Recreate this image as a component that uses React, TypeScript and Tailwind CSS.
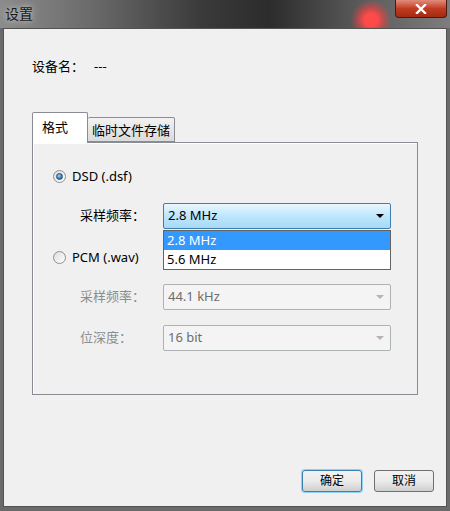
import React from "react";

const font = { fontFamily: '"Noto Sans", "Noto Sans CJK SC", sans-serif' };

function Radio({ checked }: { checked: boolean }) {
  return (
    <span className="flex h-[13px] w-[13px] items-center justify-center rounded-full border border-[#8e8f8f] bg-gradient-to-br from-[#dcdcdc] to-[#ffffff]">
      {checked && (
        <span className="h-[7px] w-[7px] rounded-full border border-[#1b4f7a] bg-[radial-gradient(circle_at_40%_35%,#9fd4f7,#2a6ea8_70%)]" />
      )}
    </span>
  );
}

function Arrow({ color }: { color: string }) {
  return (
    <svg width="8" height="4" viewBox="0 0 8 4">
      <path d="M0 0 L8 0 L4 4 Z" fill={color} />
    </svg>
  );
}

function Combo({ value, active }: { value: string; active?: boolean }) {
  if (active) {
    return (
      <div className="flex h-[26px] w-[228px] items-center justify-between rounded-[2px] border border-[#3c7fb1] bg-gradient-to-b from-[#eaf6fd] via-[#bee6fd] to-[#a7d9f5] pl-[4px] pr-[6px] text-[13px] text-black">
        <span>{value}</span>
        <Arrow color="#000" />
      </div>
    );
  }
  return (
    <div className="flex h-[26px] w-[228px] items-center justify-between rounded-[2px] border border-[#adb2b5] bg-[#f4f4f4] pl-[4px] pr-[6px] text-[13px] text-[#6d6d6d]">
      <span>{value}</span>
      <Arrow color="#b4b4b4" />
    </div>
  );
}

export default function App() {
  return (
    <div className="relative h-[511px] w-[450px] overflow-hidden bg-[#6a6a6a]" style={font}>
      {/* title bar */}
      <div className="relative h-[28px] bg-[linear-gradient(90deg,#8c8c8c_0%,#6b6b6b_20%,#3a3a3a_45%,#2c2c2c_60%,#5a5a5a_80%,#7d7d7d_100%)]">
        <span className="absolute left-[5px] top-[3px] text-[14px] text-[#1a1a1a] [text-shadow:0_0_6px_rgba(255,255,255,0.8)]">
          设置
        </span>
        <div className="absolute left-[350px] top-[0px] h-[40px] w-[42px] rounded-full bg-[radial-gradient(circle,#ff4a4a_22%,rgba(255,60,60,0.5)_45%,rgba(255,60,60,0)_70%)]" />
        <div className="absolute right-[3px] top-0 flex h-[18px] w-[52px] items-center justify-center rounded-b-[4px] border border-t-0 border-[#4a1a12] bg-gradient-to-b from-[#e08c7c] via-[#c23b21] to-[#a42a12]">
          <svg width="12" height="10" viewBox="0 0 12 10">
            <path d="M2 1 L10 9 M10 1 L2 9" stroke="#fff" strokeWidth="2.4" strokeLinecap="square" />
          </svg>
        </div>
      </div>

      {/* client area */}
      <div className="relative mx-[3px] h-[479px] border border-[#525252] bg-[#f0f0f0] text-[12px] text-black">
        <div className="flex gap-[10px] pl-[28px] pt-[28px] text-[13px]">
          <span>设备名：</span>
          <span>---</span>
        </div>

        {/* tabs */}
        <div className="ml-[28px] mt-[35px] w-[386px]">
          <div className="flex items-end">
            <div className="relative z-10 -mb-px h-[31px] w-[56px] rounded-t-[2px] border border-b-0 border-[#898c95] bg-white pl-[9px] pt-[5px] text-[13px]">
              格式
            </div>
            <div className="h-[25px] rounded-t-[2px] border border-l-0 border-[#898c95] bg-gradient-to-b from-[#f2f2f2] to-[#dbdbdb] px-[4px] pt-[3px] text-[13px]">
              临时文件存储
            </div>
          </div>
          <div className="relative h-[253px] border border-[#898c95] bg-[#f0f0f0] shadow-[inset_1px_1px_0_#fff]">
            <div className="flex items-center gap-[6px] pl-[20px] pt-[24px] text-[13px]">
              <Radio checked />
              <span>DSD (.dsf)</span>
            </div>
            <div className="mt-[17px] flex items-center pl-[47px]">
              <span className="w-[83px] text-[13px]">采样频率：</span>
              <Combo value="2.8 MHz" active />
            </div>
            <div className="mt-[19px] flex items-center gap-[6px] pl-[20px] text-[13px]">
              <Radio checked={false} />
              <span>PCM (.wav)</span>
            </div>
            <div className="mt-[16px] flex items-center pl-[47px]">
              <span className="w-[83px] text-[13px] text-[#8d8d8d]">采样频率：</span>
              <Combo value="44.1 kHz" />
            </div>
            <div className="mt-[15px] flex items-center pl-[47px]">
              <span className="w-[83px] text-[13px] text-[#8d8d8d]">位深度：</span>
              <Combo value="16 bit" />
            </div>

            {/* open dropdown list */}
            <div className="absolute left-[130px] top-[87px] w-[228px] border border-[#646464] bg-white text-[13px]">
              <div className="h-[19px] bg-[#3399ff] pl-[3px] leading-[19px] text-white">2.8 MHz</div>
              <div className="h-[19px] pl-[3px] leading-[19px]">5.6 MHz</div>
            </div>
          </div>
        </div>

        {/* buttons */}
        <div className="mt-[75px] flex justify-end gap-[12px] pr-[12px]">
          <button className="h-[22px] w-[60px] rounded-[3px] border border-[#3c7fb1] bg-gradient-to-b from-[#f2f2f2] via-[#ebebeb] to-[#cfcfcf] text-[12px] shadow-[0_0_0_1px_#8fd0f5]">
            确定
          </button>
          <button className="h-[22px] w-[60px] rounded-[3px] border border-[#707070] bg-gradient-to-b from-[#f2f2f2] via-[#ebebeb] to-[#cfcfcf] text-[12px]">
            取消
          </button>
        </div>
      </div>
    </div>
  );
}
